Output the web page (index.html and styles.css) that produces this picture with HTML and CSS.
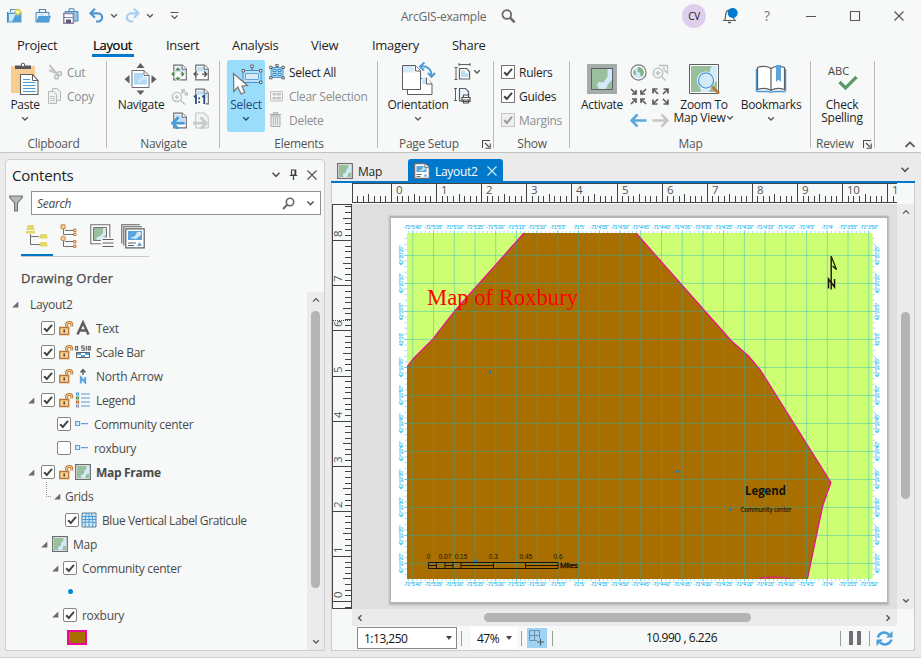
FILE: index.html
```html
<!DOCTYPE html>
<html lang="en">
<head>
<meta charset="utf-8">
<title>ArcGIS-example</title>
<link rel="stylesheet" href="styles.css">
</head>
<body>
<svg class="defs" width="0" height="0" aria-hidden="true">
  <symbol id="chev" viewBox="0 0 8 6"><path d="M1.2 1.2L4 4l2.8-2.8" fill="none" stroke="currentColor" stroke-width="1.3"/></symbol>
  <symbol id="chev-up" viewBox="0 0 8 6"><path d="M1 4.6L4 1.6l3 3" fill="none" stroke="currentColor" stroke-width="1.2"/></symbol>
  <symbol id="check" viewBox="0 0 14 14"><path d="M3.2 7.2l2.6 2.7 5.2-6" fill="none" stroke="currentColor" stroke-width="2"/></symbol>
  <symbol id="close" viewBox="0 0 12 12"><path d="M1.5 1.5l9 9m0-9l-9 9" fill="none" stroke="currentColor" stroke-width="1.2"/></symbol>
  <symbol id="tri" viewBox="0 0 7 7"><path d="M6.3.4v6.1H.2z" fill="#6e686e"/></symbol>
  <symbol id="launch" viewBox="0 0 9 9"><path d="M.5 8V.5H8M3 3l4 4M8.2 3.5v4.7H3.500" fill="none" stroke="#4a4a4a" stroke-width="1.1"/></symbol>
  <symbol id="lock" viewBox="0 0 15 15"><path d="M7.600 6V4a2.600 2.600 0 0 1 5.200 0v1.600" fill="none" stroke="#c07f3c" stroke-width="3"/><path d="M7.600 6V4a2.600 2.600 0 0 1 5.200 0v1.400" fill="none" stroke="#fbd7a0" stroke-width="1"/><path d="M.7 6.500h9v7h-9z" fill="#fbcf91" stroke="#b9783a" stroke-width="1.300"/><path d="M4.400 8.500h1.600v3H4.400z" fill="#5a4a3a"/></symbol>
  <symbol id="mapico" viewBox="0 0 16 16"><path d="M.7.7h14.600v14.600H.7z" fill="#fff" stroke="#6d6d70" stroke-width="1.300"/><path d="M2 2h12v12H2z" fill="#9abf9d"/><path d="M14 2v7.500l-2.500.5-1.300 4H6.600l-1-2.400L9 9.500l.4-3L11.400 5V2z" fill="#d3eaf8"/></symbol>
  <symbol id="layoutico" viewBox="0 0 16 16"><path d="M.7.7H11l4.300 4v10.600H.7z" fill="#fff" stroke="#6d6d70" stroke-width="1.200"/><path d="M2.500 3h10v6h-10z" fill="#5aa5dc"/><path d="M4 8l4-1.500L9 4l3-1v3L8.500 8z" fill="#cfe8f8"/><path d="M11 .7v4h4.300" fill="#fff" stroke="#6d6d70"/><path d="M2.500 11.500h5M2.500 13.500h4" stroke="#6d6d70"/><path d="M9.500 13.500l2-2.500 2 2.500z" fill="#5aa5dc"/></symbol>
  <symbol id="page" viewBox="0 0 16 16"><path d="M2.600 1h8l3.800 3.800V15H2.600z" fill="#fff" stroke="#6d6d70" stroke-width="1.100"/><path d="M4 2.500h6v3h3V9H4z" fill="#bfe0f6"/><path d="M10.500 1v4h4" fill="#fff" stroke="#6d6d70"/></symbol>
  <symbol id="legitem" viewBox="0 0 14 8"><path d="M.6 1.500h4v4h-4z" fill="#d7ecf9" stroke="#5aa5dc" stroke-width="1.200"/><path d="M6 3.600h7" stroke="#5aa5dc" stroke-width="1.200"/></symbol>
</svg>

<header class="titlebar">
  <div class="quick">
    <svg width="16" height="16" viewBox="0 0 16 16"><path d="M.5 4.500h14v10H.5z" fill="#4f9fda"/><path d="M3.500 4V1.500h6V4M.5 4v10.500" fill="none" stroke="#4f86b4"/><path d="M2 6h7l-4 7.500H2z" fill="#cfe6f6"/><path d="M10.700-.5v9M6.500 4h9M7.800 1l6 6M13.800 1l-6 6" stroke="#ded658" stroke-width=".9"/><circle cx="10.800" cy="4" r="2.300" fill="#fff9b8" stroke="#d6cf45" stroke-width="1.200"/></svg>
    <svg width="16" height="16" viewBox="0 0 16 16"><path d="M1 14V4.500h13V14z" fill="#e9f3fa" stroke="#4f86b4"/><path d="M4.500 4V1.500h6V4" fill="none" stroke="#4f86b4" stroke-width="1.200"/><path d="M1 14l2.500-6H16l-2.500 6z" fill="#4f9fda"/><path d="M2 6h7l-1.500 2" fill="#bddcf2"/></svg>
    <svg width="16" height="16" viewBox="0 0 16 16"><path d="M2 13V3.500h13V13z" fill="#8fc6ec" stroke="#4f86b4"/><path d="M6 3V.800h5V3" fill="none" stroke="#4f86b4"/><path d="M.8 5.500h9.600v9.700H.8z" fill="#fff" stroke="#8d84a5" stroke-width="1.500"/><path d="M3 11.500h5v3.500H3z" fill="#605a70"/><path d="M1 9.500h9" stroke="#8d84a5"/></svg>
    <svg class="undo" width="15" height="15" viewBox="0 0 15 15"><path d="M6 .8L1.500 5.300 6 9.800M2 5.300h7a4 4 0 0 1 0 8.200H7" fill="none" stroke="#4b96d2" stroke-width="2.200"/></svg>
    <svg class="c" width="8" height="6"><use href="#chev"/></svg>
    <svg class="redo" width="15" height="15" viewBox="0 0 15 15"><path d="M9 .8l4.500 4.500L9 9.800M13 5.300H6a4 4 0 0 0 0 8.200h2" fill="none" stroke="#a8cfee" stroke-width="2.200"/></svg>
    <svg class="c" width="8" height="6"><use href="#chev"/></svg>
    <svg class="custom" width="9" height="9" viewBox="0 0 9 9"><path d="M.5 1.500h8M1.500 4.500l3 3 3-3" fill="none" stroke="#555" stroke-width="1.100"/></svg>
  </div>
  <div class="apptitle"><span class="w-app">ArcGIS-example</span>
    <svg width="15" height="15" viewBox="0 0 15 15"><circle cx="5.800" cy="5.500" r="4.400" fill="none" stroke="#6a6a6a" stroke-width="1.700"/><path d="M9 8.700l4.600 4.600" stroke="#6a6a6a" stroke-width="2.600"/></svg>
  </div>
  <div class="winctl">
    <span class="avatar">CV</span>
    <svg class="bell" width="16" height="16" viewBox="0 0 16 16"><path d="M1 12.500h13M2.500 12.500C4 10.500 3 8 4 5c.5-2 2-3 3.500-3s3 1 3.500 3c.8 3 .2 5.500 1.500 7.500" fill="none" stroke="#5c5c5c" stroke-width="1.200"/><path d="M6 14.500h3" stroke="#5c5c5c" stroke-width="1.500"/><circle cx="10.700" cy="5" r="5" fill="#0079d0"/></svg>
    <span class="help">?</span>
    <svg class="min" width="12" height="12" viewBox="0 0 12 12"><path d="M1 6.500h10" stroke="#555"/></svg>
    <svg class="max" width="12" height="12" viewBox="0 0 12 12"><path d="M1.500 1.500h9v9h-9z" fill="none" stroke="#555" stroke-width="1.100"/></svg>
    <svg class="x" width="12" height="12"><use href="#close"/></svg>
  </div>
</header>

<nav class="tabs">
  <span>Project</span><span class="on"><b>Layout</b></span><span>Insert</span><span>Analysis</span><span>View</span><span>Imagery</span><span>Share</span>
</nav>

<section class="ribbon">
  <div class="group clip">
    <div class="body">
      <div class="big paste">
        <svg width="30" height="35" viewBox="0 0 30 35"><path d="M1 6h24v27H1z" fill="#f7cd92"/><path d="M5 5.500h16v3.500H5z" fill="#56565a"/><circle cx="13" cy="5" r="1.800" fill="#fff" stroke="#56565a"/><path d="M10.500 14.500h12l5.500 6v14H10.500z" fill="#fff" stroke="#5e5e62" stroke-width="1.100"/><path d="M22.500 14.500v6H28" fill="none" stroke="#5e5e62"/><path d="M13 19.500h7M13 22.500h12.500M13 25.500h12.500M13 28.500h12.500M13 31.500h12.500" stroke="#4b9bd6"/></svg>
        <span>Paste</span><svg class="c" width="8" height="6"><use href="#chev"/></svg>
      </div>
      <div class="stack dim">
        <div><svg width="16" height="16" viewBox="0 0 16 16"><path d="M2.500 1l7.500 9M2 6l8 3.500" stroke="#c4c6c6" stroke-width="2.200"/><circle cx="12.500" cy="9.500" r="1.900" fill="none" stroke="#b4b6b6" stroke-width="1.300"/><circle cx="9.500" cy="13" r="1.900" fill="none" stroke="#b4b6b6" stroke-width="1.300"/></svg><span>Cut</span></div>
        <div><svg width="16" height="16" viewBox="0 0 16 16"><path d="M5.500.6h5l3 3v8.800h-8z" fill="#f1f2f2" stroke="#b5b7b7"/><path d="M1.500 3.500h5l3 3v8.900h-8z" fill="#f1f2f2" stroke="#b5b7b7"/><path d="M3 8.500h5M3 10.500h5M3 12.500h5" stroke="#c5c7c7"/></svg><span>Copy</span></div>
      </div>
    </div>
    <div class="label"><span>Clipboard</span></div>
  </div>

  <div class="group nav">
    <div class="body">
      <div class="big navi">
        <svg width="34" height="35" viewBox="0 0 34 35"><path d="M12.500 8h8l-4-5zM12.500 30.500h8l-4 4.500zM5.500 15v8.500L.5 19.200zM27.500 15v8.500l5-4.300z" fill="#5e5e62"/><path d="M8 10.500h12l5 5v12H8z" fill="#fff" stroke="#6d6d70"/><path d="M10 13h9v4h4v7.500H10z" fill="#aed8f3"/><path d="M14.500 22.500l3-4h5" stroke="#d5ecfa" stroke-width="2" fill="none"/><path d="M20 10.500v5h5" fill="none" stroke="#6d6d70"/></svg>
        <span>Navigate</span>
      </div>
      <div class="icogrid">
        <svg width="17" height="17" viewBox="0 0 16 16"><use href="#page"/><path d="M6.500 4v11M1 9.500h11M4.500 6l2-2 2 2M4.500 13l2 2 2-2M3 7.500l-2 2 2 2M10 7.500l2 2-2 2" fill="none" stroke="#fff" stroke-width="2.600"/><path d="M6.500 4v3M6.500 12v3M1 9.500h3M9 9.500h3M4.500 6l2-2 2 2M4.500 13l2 2 2-2M3 7.500l-2 2 2 2M10 7.500l2 2-2 2" fill="none" stroke="#4f8a55" stroke-width="1.200"/></svg>
        <svg width="17" height="17" viewBox="0 0 16 16"><use href="#page"/><path d="M0 7h13v5H0z" fill="#f7f9f8"/><path d="M1 9.500h4M8.500 9.500H13M3.500 7L1 9.500 3.500 12M10.500 7L13 9.500 10.500 12" fill="none" stroke="#4a4a4a" stroke-width="1.200"/></svg>
        <svg width="17" height="17" viewBox="0 0 16 16" fill="none" stroke="#bdbfbf" stroke-width="1.200"><circle cx="5.500" cy="8.500" r="4.300"/><path d="M9 11.500l4 4M3.500 8.500h4M5.500 6.500v4M10.500 1.500h2v2h-2zM13.500 4.500h2v2h-2zM9.500 4.500h2"/></svg>
        <svg width="17" height="17" viewBox="0 0 16 16"><use href="#page"/><path d="M0 6.500h12V16H0z" fill="#f7f9f8"/><path d="M.8 8.300l2-1V15M8.600 8.300l2-1V15M5.800 9v1.700M5.800 12.500v1.700" fill="none" stroke="#2d4a80" stroke-width="1.700"/></svg>
        <svg width="17" height="17" viewBox="0 0 16 16"><use href="#page"/><path d="M7 5L1.500 10.500 7 16M2 10.500h11" fill="none" stroke="#4b9bd6" stroke-width="2.700"/></svg>
        <svg width="17" height="17" viewBox="0 0 16 16"><path d="M2.600 1h8l3.800 3.800V15H2.600z" fill="#f3f4f4" stroke="#c3c5c5"/><path d="M7 5l5.500 5.500L7 16M12 10.500H0" fill="none" stroke="#c9cbcb" stroke-width="2.600"/></svg>
      </div>
    </div>
    <div class="label"><span>Navigate</span></div>
  </div>

  <div class="group elem">
    <div class="body">
      <div class="big select">
        <svg width="36" height="35" viewBox="0 0 36 35"><path d="M15 10.500h18v12H15z" fill="#b9e1f9" stroke="#4b8fc4"/><path d="M17.500 13.500h13v6h-13z" fill="#dcebf5" stroke="#5aa5dc"/><g fill="#fff" stroke="#5d6268"><path d="M14 9.500h2.500V12H14zM31.500 9.500H34V12h-2.500zM31.500 21H34v2.500h-2.500zM22.800 5h2.500v2.500h-2.500zM24 7.500v3"/></g><path d="M5.500 13.500l.3 18 4-4.500 3.200 7 3.700-1.800L14 26l5.500-.5z" fill="#fff" stroke="#75706f" stroke-width="1.200"/></svg>
        <span>Select</span><svg class="c" width="8" height="6"><use href="#chev"/></svg>
      </div>
      <div class="stack">
        <div><svg width="16" height="16" viewBox="0 0 16 16"><path d="M2 3.500h12v10H2z" fill="#9fd0f0" stroke="#4b9bd6"/><path d="M4 5.500h3v2H4zM9 5.500h3v2H9zM4 9.500h3v2H4zM9 9.500h3v2H9z" fill="#fff" stroke="#3b88c4"/><path d="M.7 2.300h2.400v2.200H.7zM12.900 2.300h2.400v2.200h-2.400zM.7 12.700h2.400v2.200H.7zM12.900 12.700h2.400v2.200h-2.400zM6.800.3h2.400v2.200H6.800z" fill="#fff" stroke="#5d5d60"/></svg><span>Select All</span></div>
        <div class="dim"><svg width="16" height="16" viewBox="0 0 16 16"><path d="M1.500 3.500h12v9.500h-12z" fill="#f3f4f4" stroke="#c1c3c3"/><path d="M4 5.500h3v1.500H4zM8.500 5.500h3v1.500h-3zM4 9.500h3V11H4zM8.500 9.500h3V11h-3z" fill="none" stroke="#b9bbbb"/></svg><span>Clear Selection</span></div>
        <div class="dim"><svg width="16" height="16" viewBox="0 0 16 16"><path d="M.8 2.700h11.500M4.500 2.200V.800h4v1.400" fill="none" stroke="#a9abab" stroke-width="1.200"/><path d="M2 4h9v10.500H2z" fill="#e8eaea" stroke="#a9abab"/><path d="M4.500 5v8M6.500 5v8M8.500 5v8" stroke="#bcbebe"/></svg><span>Delete</span></div>
      </div>
    </div>
    <div class="label"><span>Elements</span></div>
  </div>

  <div class="group setup">
    <div class="body">
      <div class="big orient">
        <svg width="36" height="35" viewBox="0 0 36 35"><path d="M7.500 18.500h19l5.500 5v11H7.500z" fill="#fff" stroke="#5e5e62"/><path d="M22 18h5v6h-5z" fill="#c7e5f8"/><path d="M26.500 17.500v6.500H32" fill="#fff" stroke="#5e5e62"/><path d="M2.500 5.500h13l5 5v19h-18z" fill="#fff" stroke="#5e5e62"/><path d="M3 6h11v6.500H3z" fill="#d3eaf8"/><path d="M15.500 5.500v5.500h5" fill="#fff" stroke="#5e5e62"/><path d="M20.500 6.500c6-1 11 2 11 9M24.500 2.500L20 6.500l4 4M28 13l3.500 3.800 3.500-3.800" fill="none" stroke="#4b9bd6" stroke-width="1.900"/></svg>
        <span>Orientation</span><svg class="c" width="8" height="6"><use href="#chev"/></svg>
      </div>
      <div class="stack bare">
        <div><svg width="18" height="18" viewBox="0 0 18 18"><path d="M5.500 5.500h7l3 3V16h-10z" fill="#fff" stroke="#5e5e62" stroke-width="1.200"/><path d="M7 7.500h4V10h3v4H7z" fill="#b9def6"/><path d="M2 4.500v12M.5 4.500h3M.5 16.500h3M5 1.500h11M5 0v3M16 0v3" stroke="#5e5e62" fill="none"/></svg><svg class="c" width="8" height="6"><use href="#chev"/></svg></div>
        <div><svg width="18" height="18" viewBox="0 0 18 18"><path d="M5.500 1.500h6l3 3V14h-9z" fill="#e9f4fb" stroke="#5e5e62" stroke-width="1.200"/><path d="M1.500 1v13M0 1.500h3M0 13.500h3" stroke="#5e5e62"/><path d="M8 10.500h8v4H8zM9.500 8h5v2.500h-5zM9.500 13h5v3h-5z" fill="#fff" stroke="#4e4e52" stroke-width="1.200"/></svg></div>
      </div>
    </div>
    <div class="label"><span>Page Setup</span><svg class="l" width="9" height="9"><use href="#launch"/></svg></div>
  </div>

  <div class="group show">
    <div class="body">
      <div class="stack">
        <div><i class="cb"><svg width="14" height="14"><use href="#check"/></svg></i><span>Rulers</span></div>
        <div><i class="cb"><svg width="14" height="14"><use href="#check"/></svg></i><span>Guides</span></div>
        <div class="dim"><i class="cb"><svg width="14" height="14"><use href="#check"/></svg></i><span>Margins</span></div>
      </div>
    </div>
    <div class="label"><span>Show</span></div>
  </div>

  <div class="group map">
    <div class="body">
      <div class="big act">
        <svg width="30" height="35" viewBox="0 0 30 35"><path d="M0 4h30v30H0z" fill="#a5adaa"/><path d="M4.500 8.500h21v21h-21z" fill="#9abf9d" stroke="#5e5e62"/><path d="M25 9v11l-4 4-2 5h-7l-2-4 1.500-3 5 .5 4-6V9z" fill="#d3eaf8"/></svg>
        <span>Activate</span>
      </div>
      <div class="icogrid">
        <svg width="17" height="17" viewBox="0 0 17 17"><circle cx="8.500" cy="8.500" r="7.600" fill="#fff" stroke="#77777a" stroke-width="1.200"/><circle cx="8.500" cy="8.500" r="5.800" fill="#cfe8f8"/><path d="M8 3c3 0 5.500 2 6 5.500L12 13l-2-2 .5-2-3-1.500zM3.500 6l2 1 .5 4-2.500-1z" fill="#84b38a"/></svg>
        <svg width="17" height="17" viewBox="0 0 17 17" fill="none" stroke="#bdbfbf" stroke-width="1.300"><circle cx="6" cy="9" r="4.800"/><path d="M9.500 12.500l4 4M3.500 9h5M6 6.500v5M7 1.500h8.500V9L12 6V3"/></svg>
        <svg width="17" height="17" viewBox="0 0 17 17" fill="none" stroke="#5e5e62" stroke-width="1.700"><path d="M1 1l4.500 4.500M6 2v4H2M16 1l-4.500 4.500M11 2v4h4M1 16l4.500-4.500M6 15v-4H2M16 16l-4.500-4.500M11 15v-4h4"/></svg>
        <svg width="17" height="17" viewBox="0 0 17 17" fill="none" stroke="#5e5e62" stroke-width="1.700"><path d="M6 6L1.500 1.500M1 5.500V1h4.500M11 6l4.500-4.500M16 5.500V1h-4.500M6 11l-4.500 4.500M1 11.500V16h4.500M11 11l4.500 4.500M16 11.500V16h-4.500"/></svg>
        <svg width="17" height="17" viewBox="0 0 17 17" fill="none" stroke="#5aa8e0" stroke-width="2.500"><path d="M7.500 2.500l-6 6 6 6M2 8.500h14.500"/></svg>
        <svg width="17" height="17" viewBox="0 0 17 17" fill="none" stroke="#c6c8c8" stroke-width="2.500"><path d="M9.500 2.500l6 6-6 6M15 8.500H.5"/></svg>
      </div>
      <div class="big zoom">
        <svg width="32" height="35" viewBox="0 0 32 35"><path d="M1.500 4.500h29v29h-29z" fill="#fff" stroke="#5e5e62"/><path d="M3 6h26v26H3z" fill="#9abf9d"/><path d="M29 6v15l-5 3-3 8h-8l-1-4 6-4 4-8V9l2-3z" fill="#d3eaf8"/><circle cx="18" cy="20.500" r="7.300" fill="#d3eaf8" stroke="#fff" stroke-width="3.500"/><circle cx="18" cy="20.500" r="7.600" fill="#d3eaf8" stroke="#4b9bd6" stroke-width="1.400"/><path d="M24 26.500l7 7" stroke="#bb8040" stroke-width="3"/></svg>
        <span>Zoom To</span><span class="two">Map View <svg class="c" width="8" height="6"><use href="#chev"/></svg></span>
      </div>
      <div class="big bm">
        <svg width="32" height="35" viewBox="0 0 32 35"><path d="M1.500 31.500V9M30.500 31.500V9" stroke="#4b9bd6" stroke-width="1.500"/><path d="M1.500 31.500h11l3.500.8 3.500-.8h11" stroke="#4b9bd6" stroke-width="1.300" fill="none"/><path d="M2.500 7.500c4-1.600 10-1.600 13.500 1 3.500-2.600 9.500-2.600 13.500-1v22c-4-1.300-10-1.300-13.500 1-3.500-2.300-9.500-2.300-13.500-1zM16 8.500v22" fill="#fff" stroke="#5e5e62" stroke-width="1.200"/><path d="M21 5h5v17l-2.500-2.500L21 22z" fill="#5aa5dc"/></svg>
        <span>Bookmarks</span><svg class="c" width="8" height="6"><use href="#chev"/></svg>
      </div>
    </div>
    <div class="label"><span>Map</span></div>
  </div>

  <div class="group review">
    <div class="body">
      <div class="big spell">
        <div class="abc">ABC<svg width="20" height="16" viewBox="0 0 20 16"><path d="M1.500 7l6 6L18.500 2" fill="none" stroke="#5c9a68" stroke-width="3.300"/></svg></div>
        <span>Check</span><span class="two">Spelling</span>
      </div>
    </div>
    <div class="label"><span>Review</span><svg class="l" width="9" height="9"><use href="#launch"/></svg></div>
  </div>
  <svg class="collapse" width="12" height="9"><use href="#chev-up"/></svg>
</section>

<main class="work">
  <aside class="contents">
    <div class="ctitle"><span>Contents</span>
      <svg class="c1" width="10" height="8"><use href="#chev"/></svg>
      <svg class="c2" width="9" height="11" viewBox="0 0 9 11"><path d="M2.500 1h4.200v5H2.500zM.8 6.500h7.400M4.500 7v4M6 1v5" fill="none" stroke="#444" stroke-width="1.200"/></svg>
      <svg class="c3" width="12" height="12"><use href="#close"/></svg>
    </div>
    <div class="searchrow">
      <svg width="14" height="17" viewBox="0 0 14 17"><path d="M.7 1h12.600v1.500L8.500 8v8H5.600V8L.7 2.500z" fill="#b5bab8" stroke="#707070" stroke-width="1.100"/></svg>
      <div class="searchbox"><em>Search</em>
        <svg width="13" height="13" viewBox="0 0 13 13"><circle cx="8" cy="5" r="3.700" fill="none" stroke="#666" stroke-width="1.600"/><path d="M5.500 7.500L1 12" stroke="#666" stroke-width="2"/></svg>
        <svg width="9" height="7"><use href="#chev"/></svg>
      </div>
    </div>
    <div class="views">
      <svg width="24" height="24" viewBox="0 0 24 24"><path d="M5.500 10v10.500H15M5.500 12.500H14" fill="none" stroke="#707070"/><path d="M2.500 1h6l1 5H1.500zM1 7h9v2.500H1zM15.500 10h6l1.500 4.500h-9zM15.500 18h6l1.500 4.500h-9z" fill="#e4d765"/></svg>
      <svg width="17" height="24" viewBox="0 0 17 24"><path d="M3.500 5v5.500H13M5 6.500h8M3.500 15v7.500H13M5 17.500h8" fill="none" stroke="#707070"/><path d="M1 .8h4v4H1zM13.500 5h2.500v2.500h-2.500zM13.500 9h2.500v2.500h-2.500zM13.500 16.500h2.500V19h-2.500zM13.500 21h2.500v2.500h-2.500z" fill="#f9c98d" stroke="#c98848"/><circle cx="3.200" cy="14.500" r="2.300" fill="#f9c98d" stroke="#c98848"/></svg>
      <svg width="24" height="24" viewBox="0 0 24 24"><path d="M.8.8h19v19H.8z" fill="#fff" stroke="#707070" stroke-width="1.100"/><path d="M3.500 3.500h13v13h-13z" fill="#9abf9d" stroke="#707070"/><path d="M16 4v7l-3 2-2 3H7l-1-2 4-2 3-3V4z" fill="#d3eaf8"/><path d="M11 13.500h13v10H11z" fill="#f7f9f8"/><path d="M12.500 15.500h11M12.500 19h11M12.500 22.500h11" stroke="#606060"/></svg>
      <svg width="24" height="25" viewBox="0 0 24 25"><path d="M.8 19.500V.8h18M2.800 21.500V2.800h18" fill="none" stroke="#606060" stroke-width="1.100"/><path d="M4.800 4.800h18.400v19H4.800z" fill="#fff" stroke="#606060" stroke-width="1.200"/><path d="M7 7h14v9H7z" fill="#5aa5dc"/><path d="M9 14l5-2 2-4 4 0v3l-5 4z" fill="#cfe8f8"/><path d="M7 19h8M7 21.500h6" stroke="#606060"/><path d="M16 22l2.500-4 2.500 4z" fill="#5aa5dc"/></svg>
    </div>
    <div class="viewline"></div>
    <h2>Drawing Order</h2>
    <div class="treewrap">
      <div class="tree">
        <div class="row r-root"><svg class="t"><use href="#tri"/></svg><span>Layout2</span></div>
        <div class="row r-item"><i class="cb r"><svg width="14" height="14"><use href="#check"/></svg></i><svg class="lk"><use href="#lock"/></svg><svg class="ic" viewBox="0 0 16 16"><path d="M2.500 14.500L8 2.500l5.500 12M4.500 10.500h7" fill="none" stroke="#5e5e62" stroke-width="2.500"/></svg><span>Text</span></div>
        <div class="row r-item"><i class="cb r"><svg width="14" height="14"><use href="#check"/></svg></i><svg class="lk"><use href="#lock"/></svg><svg class="ic" viewBox="0 0 16 16"><path d="M.6 2.500h2v3.500h-2zM9.500 2H6.700v2h2.500v2.200H6.300M11.300 2v4.500M13.300 2.500h2v3.500h-2z" fill="none" stroke="#5e5e62" stroke-width="1.100"/><path d="M1.500 8.500h13v5h-13z" fill="#fff" stroke="#5e5e62"/><path d="M2 9h4v2h4V9h4v2h-4v2H6v-2H2z" fill="#5aa5dc"/></svg><span>Scale Bar</span></div>
        <div class="row r-item"><i class="cb r"><svg width="14" height="14"><use href="#check"/></svg></i><svg class="lk"><use href="#lock"/></svg><svg class="ic" viewBox="0 0 16 16"><path d="M8 7V2M5.500 4.500L8 1.700l2.500 2.800" fill="none" stroke="#5e5e62" stroke-width="1.500"/><path d="M5.800 15.500V9.500l4.400 5V9" fill="none" stroke="#5aa5dc" stroke-width="2"/></svg><span>North Arrow</span></div>
        <div class="row r-parent"><svg class="t"><use href="#tri"/></svg><i class="cb r"><svg width="14" height="14"><use href="#check"/></svg></i><svg class="lk"><use href="#lock"/></svg><svg class="ic" viewBox="0 0 16 16"><path d="M6 2h9M6 6h9M6 10h9M6 14h9" stroke="#4b9bd6"/><g fill="#fff" stroke-width="1.200"><path d="M1.500 1h2v2h-2z" stroke="#4b9bd6"/><path d="M1.500 5h2v2h-2z" stroke="#4f8a55"/><path d="M1.500 9h2v2h-2z" stroke="#c07030"/><path d="M1.500 13h2v2h-2z" stroke="#9a94b4"/></g></svg><span>Legend</span></div>
        <div class="row r-leg"><i class="cb r"><svg width="14" height="14"><use href="#check"/></svg></i><svg class="lg"><use href="#legitem"/></svg><span>Community center</span></div>
        <div class="row r-leg"><i class="cb r"></i><svg class="lg"><use href="#legitem"/></svg><span>roxbury</span></div>
        <div class="row r-parent"><svg class="t"><use href="#tri"/></svg><i class="cb r"><svg width="14" height="14"><use href="#check"/></svg></i><svg class="lk"><use href="#lock"/></svg><svg class="ic"><use href="#mapico"/></svg><span class="bold">Map Frame</span></div>
        <div class="row r-grids"><i class="dots"></i><svg class="t"><use href="#tri"/></svg><span>Grids</span></div>
        <div class="row r-grat"><i class="cb r"><svg width="14" height="14"><use href="#check"/></svg></i><svg class="ic" viewBox="0 0 16 16"><path d="M1 1h14v14H1z" fill="#cfe8f8" stroke="#607c90"/><path d="M5.500 1C4 6 4 11 4.500 15M10.500 1C12 6 12 11 11.500 15M8 1v14M1 4.500h14M1 11c4-1.500 10-1.500 14 0M1 7.500h14" fill="none" stroke="#4b9bd6"/></svg><span class="gl">Blue Vertical Label Graticule</span></div>
        <div class="row r-map"><svg class="t"><use href="#tri"/></svg><svg class="ic"><use href="#mapico"/></svg><span>Map</span></div>
        <div class="row r-layer"><svg class="t"><use href="#tri"/></svg><i class="cb r"><svg width="14" height="14"><use href="#check"/></svg></i><span>Community center</span></div>
        <div class="row r-dot"><i></i></div>
        <div class="row r-layer s"><svg class="t"><use href="#tri"/></svg><i class="cb r"><svg width="14" height="14"><use href="#check"/></svg></i><span>roxbury</span></div>
        <div class="row r-swatch"><i></i></div>
      </div>
      <div class="vs tscroll"><svg width="8" height="6"><use href="#chev-up"/></svg><i></i><svg width="8" height="6"><use href="#chev"/></svg></div>
    </div>
  </aside>

  <section class="doc">
    <div class="doctabs">
      <div class="dt"><svg width="16" height="16"><use href="#mapico"/></svg><span>Map</span></div>
      <div class="dt active"><svg width="16" height="16"><use href="#layoutico"/></svg><span>Layout2</span><svg class="dx" width="12" height="12"><use href="#close"/></svg></div>
      <svg class="more" width="10" height="8"><use href="#chev"/></svg>
    </div>
    <div class="pane">
      <div class="corner"></div>
      <svg class="hruler" id="hruler" width="545" height="21" viewBox="352 184 545 21"></svg>
      <div class="corner"></div>
      <svg class="vruler" id="vruler" width="20" height="405" viewBox="332 204 20 405"></svg>
      <svg class="canvas" width="545" height="405" viewBox="352 204 545 405">
        <rect x="352" y="204" width="545" height="405" fill="#dfdfdf"/>
        <rect x="388" y="215" width="502" height="391" rx="2" fill="#d0d0d0"/>
        <rect x="389.500" y="216" width="499" height="388.500" fill="#b5b5b5"/>
        <rect x="391" y="218" width="496" height="384" fill="#fff"/>
        <rect x="407" y="233" width="465.500" height="346" fill="#cefe73"/>
        <path d="M407 579V367L413 359 432 340 455.500 310 524 233H636L704 310 731.500 341 748.500 356 760 369.500 831 482.500 823 505 818 528 807.500 579z" fill="#a86f00"/>
        <path d="M407 367L413 359 432 340 455.500 310 524 233M636 233L704 310 731.500 341 748.500 356 760 369.500 831 482.500 823 505 818 528 807.500 579M759 578.500q15-3 31 0" fill="none" stroke="#ee0a9a" stroke-width="1.200"/>
        <g id="graticule"></g>
        <g fill="#0a84c8"><circle cx="490.300" cy="372.500" r="1.400"/><circle cx="677.400" cy="471.500" r="1.500"/><circle cx="765.500" cy="491.500" r="2"/><circle cx="730.500" cy="509.500" r="1.500"/><circle cx="475.300" cy="560.500" r="1.500"/></g>
        <text class="maptitle" x="427" y="305" textLength="151" lengthAdjust="spacingAndGlyphs">Map of Roxbury</text>
        <text class="legtitle" x="745" y="494.500" textLength="41" lengthAdjust="spacingAndGlyphs">Legend</text>
        <text class="legtext" x="740.500" y="512" textLength="51" lengthAdjust="spacingAndGlyphs">Community center</text>
        <g fill="none" stroke="#1c1208"><path d="M831.200 256v33.500" stroke-width="1.400"/><path d="M831.500 257l5 12.500-4-3.500" stroke-width="1.200"/><path d="M828.500 288.500v-9.500l6 8v-8" stroke-width="1.500"/>
        <path d="M428.500 562.500h129.500v6H428.500zM436.500 562v7M445 562v7M453 562v7M461 562v7M493.500 562v7M525.500 562v7M428.500 565.500h8M445 565.500h8M461 565.500h32.500M525.500 565.500H558"/></g>
        <g class="scale"><text x="428.500" y="559">0</text><text x="445" y="559">0.07</text><text x="461" y="559">0.15</text><text x="493.300" y="559">0.3</text><text x="525.800" y="559">0.45</text><text x="558" y="559">0.6</text></g>
        <text class="miles" x="560" y="568" textLength="18">Miles</text>
      </svg>
      <div class="vs dscroll"><svg width="8" height="6"><use href="#chev-up"/></svg><i></i><svg width="8" height="6"><use href="#chev"/></svg></div>
      <div class="corner"></div>
      <div class="hs"><svg width="6" height="8" viewBox="0 0 6 8"><path d="M4.500 1.200L1.500 4l3 2.800" fill="none" stroke="#444" stroke-width="1.200"/></svg><i></i><svg width="6" height="8" viewBox="0 0 6 8"><path d="M1.500 1.200L4.500 4l-3 2.800" fill="none" stroke="#444" stroke-width="1.200"/></svg></div>
      <div class="corner"></div>
      <div class="status">
        <div class="scalebox"><span>1:13,250</span><b></b></div><i class="sep s1"></i>
        <div class="pct"><span>47%</span><b></b></div><i class="sep s2"></i>
        <div class="snap"><svg width="18" height="18" viewBox="0 0 18 18"><path d="M1.500 1.500h10v10h-10zM6.500 1.500v10M1.500 6.500h10" fill="none" stroke="#7291a5"/><path d="M9 9h8v8H9z" fill="#9fd3f5"/><path d="M12.500 9.500v7M9 13h7" stroke="#505a60" stroke-width="1.100"/></svg></div><i class="sep s3"></i>
        <span class="coords">10.990 , 6.226</span>
        <i class="sep s4"></i><i class="pause"></i><i class="sep s5"></i>
        <svg class="refresh" width="17" height="17" viewBox="0 0 17 17"><path d="M2 7.500C2.500 3.500 8 .5 13 4.500M15.500 9.500C14.500 13.500 9 16.500 4 12.500" fill="none" stroke="#4b9fdc" stroke-width="2.400"/><path d="M16.500 1v6.500H10zM.5 16V9.500H7z" fill="#4b9fdc"/></svg>
      </div>
    </div>
  </section>
</main>
<script src="rulers.js"></script>
</body>
</html>
```

FILE: rulers.js
```js
// Rulers: one inch of page is 45.1px on screen, with eighth-inch ticks.
const INCH = 45.1, X0 = 391.5, Y0 = 601.5;

function horizontalRuler() {
  let s = '<rect x="352.5" y="184.500" width="546" height="19" fill="#f7f9f8" stroke="#444"/>';
  for (let i = -6; i < 90; i++) {
    const x = Math.round(X0 + i * INCH / 8 - 0.5) + 0.5;
    if (x < 355 || x > 896) continue;
    const top = i % 8 === 0 ? 184 : i % 4 === 0 ? 195 : 197;
    s += `<path d="M${x} ${top}V203.500"/>`;
    if (i % 8 === 0) s += `<text x="${x + 4.5}" y="194.500">${i / 8}</text>`;
  }
  s += '<path d="M887.500 185V203" stroke-dasharray="1 1"/>';
  document.getElementById('hruler').innerHTML = s;
}

function verticalRuler() {
  let s = '<rect x="332.500" y="204.500" width="19" height="404" fill="#f7f9f8" stroke="#444"/>';
  for (let i = -1; i < 71; i++) {
    const y = Math.round(Y0 - i * INCH / 8 - 0.5) + 0.5;
    if (y < 205 || y > 608) continue;
    const left = i % 8 === 0 ? 332 : i % 4 === 0 ? 343 : 345;
    s += `<path d="M${left} ${y}H351.500"/>`;
    if (i % 8 === 0) s += `<text transform="translate(341.5 ${y - 3.5}) rotate(-90)">${i / 8}</text>`;
  }
  s += '<path d="M333 320.500H351" stroke-dasharray="1 1"/>';
  document.getElementById('vruler').innerHTML = s;
}

// Graticule: a line every five seconds of arc, labelled on all four sides.
function dms(seconds, sign) {
  const d = Math.floor(seconds / 3600), m = Math.floor(seconds % 3600 / 60), r = seconds % 60;
  return `${sign}${d}°${m}'` + (r ? `${r}"` : '');
}

function graticule() {
  let s = '<g class="minor">';
  for (let i = -1; i < 111; i++) {
    const x = 412.8 + i * 4.145;
    s += `<path d="M${x} 231v2M${x} 579v2"/>`;
  }
  for (let i = -3; i < 58; i++) {
    const y = 255.4 + i * 5.6;
    s += `<path d="M404.500 ${y}h2.500M872.500 ${y}h2.500"/>`;
  }
  s += '</g>';
  for (let i = 0; i < 23; i++) {
    const x = 412.8 + i * 20.725, t = dms(71 * 3600 + 5 * 60 + 40 - i * 5, '-');
    s += `<path d="M${x} 230V582"/><text x="${x}" y="229">${t}</text><text x="${x}" y="586">${t}</text>`;
  }
  for (let i = 0; i < 12; i++) {
    const y = 255.4 + i * 28, t = dms(42 * 3600 + 20 * 60 + 15 - i * 5, '');
    s += `<path d="M404 ${y}H875.500"/>`;
    for (const x of [403.2, 879.2]) s += `<text transform="translate(${x} ${y}) rotate(-90)">${t}</text>`;
  }
  document.getElementById('graticule').innerHTML = s;
}

horizontalRuler();
verticalRuler();
graticule();
```

FILE: styles.css
```css
* { box-sizing: border-box; }
body {
  margin: 0; width: 921px; height: 658px; overflow: hidden;
  display: flex; flex-direction: column;
  background: #f7f9f8; color: #1f1f1f;
  font: 12px/16px "Open Sans", "Noto Sans", sans-serif; letter-spacing: -0.28px;
}
svg { display: block; flex: none; color: #555; }
svg.defs { position: absolute; }
i { font-style: normal; flex: none; }
span { white-space: nowrap; }

.titlebar { display: flex; height: 33px; flex: none; }
.quick { display: flex; align-items: center; width: 401px; padding: 0 0 2px 7px; gap: 12px; }
.quick .undo { margin-left: -2px; }
.quick .c { margin-left: -6px; }
.quick .redo { margin-left: -5px; }
.quick .custom { margin-left: 4px; }
.apptitle { display: flex; align-items: center; width: 281px; color: #666; padding-bottom: 1px; }
.apptitle span { width: 100px; letter-spacing: -0.25px; padding-top: 1px; }
.winctl { display: flex; align-items: center; flex: 1; padding-bottom: 1px; }
.avatar { width: 24px; height: 24px; border-radius: 12px; background: #dfcfee; text-align: center; font-size: 10px; line-height: 24px; color: #222; }
.bell { margin-left: 16px; }
.help { width: 10px; margin-left: 24px; font-size: 14px; color: #777; text-align: center; }
.min { margin-left: 33px; }
.max { margin-left: 32px; }
.winctl .x { margin-left: 32px; }

.tabs { display: grid; grid-template-columns: 76px 73px 66px 79px 61px 80px 60px; padding-left: 17px; height: 27px; flex: none; font-size: 13px; line-height: 24px; letter-spacing: -0.3px; }
.tabs .on b { display: block; width: 42px; height: 24px; margin-left: -1px; padding-left: 1px; font-weight: 500; color: #000; border-bottom: 3px solid #0079d0; -webkit-text-stroke: 0.2px #000; }

.ribbon { display: flex; height: 93px; flex: none; border-bottom: 1px solid #c4c4c4; }
.group { position: relative; height: 92px; flex: none; }
.group::after { content: ""; position: absolute; right: 0; top: 1px; height: 87px; width: 1px; background: #bababa; }
.group .body { display: flex; height: 72px; }
.group .label { display: flex; justify-content: center; height: 20px; line-height: 24px; color: #555; }
.big { display: flex; flex-direction: column; align-items: center; height: 72px; flex: none; }
.big > svg:first-child { height: 35px; margin-bottom: 2px; }
.big span { line-height: 16px; }
.big .c { margin-top: 3px; }
.big.zoom span, .big.spell span { line-height: 13px; height: 13px; }
.big.zoom span:first-of-type, .big.spell span:first-of-type { margin-top: 1px; }
.big .two { display: flex; align-items: center; gap: 1px; }
.big .two .c { margin-top: 1px; }
.stack > div { display: flex; align-items: center; height: 24px; gap: 4px; }
.stack span { padding-top: 2px; }
.dim span { color: #8c8e8e; }
.icogrid { display: grid; grid-template-columns: 17px 17px; grid-template-rows: repeat(3, 24px); column-gap: 5px; align-items: center; }

.clip { width: 107px; }
.paste { width: 40px; margin-left: 5px; }
.clip .stack { margin-left: 2px; }
.nav { width: 113px; }
.navi { width: 60px; margin-left: 4px; }
.elem { width: 158px; }
.select { width: 38px; margin-left: 7px; margin-right: 4px; background: #9addfb; border-radius: 2px; color: #234a80; }
.select .c { color: #234a80; }
.setup { width: 116px; }
.orient { width: 70px; margin-left: 5px; margin-right: 1px; }
.bare .c { margin-left: -3px; }
.show { width: 76px; }
.show .stack { margin-left: 7px; }
.cb { display: inline-block; width: 14px; height: 14px; border: 1px solid #777; background: #fff; }
.cb svg { margin: -1px; color: #444; }
.cb.r { border-radius: 2px; border-color: #858585; }
.dim .cb { background: #eef0f0; border-color: #c4c6c6; }
.dim .cb svg { color: #999; }
.map { width: 241px; }
.act { width: 54px; margin-left: 5px; }
.zoom { width: 66px; margin-left: 2px; }
.bm { width: 68px; }
.review { width: 64px; }
.spell { width: 64px; margin-left: -1px; }
.abc { position: relative; width: 28px; height: 37px; padding-top: 3px; font-size: 11px; color: #444; letter-spacing: 0.1px; }
.abc svg { position: absolute; left: 10px; top: 15px; }
.map .icogrid { margin-left: 1px; }
.label .l { margin: 8px 3px 0 auto; }
.setup .label { padding-left: 21px; }
.review .label { padding-left: 5px; }
.collapse { margin: 80px 0 0 29px; }

.work { display: flex; flex: 1; padding: 6px 5px 0 5px; background: #ebebeb; border-bottom: 1px solid #cdcdcd; height: 505px; }
.contents { width: 320px; height: 492px; flex: none; border: 1px solid #cfcfcf; border-radius: 4px 4px 0 0; background: #f7f9f8; color: #4a4a4a; }
.ctitle { display: flex; align-items: center; height: 31px; padding: 0 0 2px 6px; color: #222; }
.ctitle span { width: 259px; font-size: 15px; letter-spacing: -0.2px; }
.ctitle .c2 { margin-left: 8px; }
.ctitle .c3 { margin-left: 8px; }
.searchrow { display: flex; align-items: center; height: 24px; padding-left: 3px; gap: 8px; }
.searchbox { display: flex; align-items: center; width: 290px; height: 24px; padding: 0 5px; border: 1px solid #909090; background: #fff; }
.searchbox em { width: 245px; padding-top: 1px; }
.searchbox svg:last-child { margin-left: 11px; }
.views { display: flex; height: 39px; padding: 9px 0 0 19px; }
.views svg:nth-child(2) { margin-left: 11px; }
.views svg:nth-child(3) { margin-left: 13px; }
.views svg:nth-child(4) { margin-left: 7px; }
.viewline { width: 128px; height: 3px; margin-left: 15px; border-bottom: 1px solid #c8c8c8; background: linear-gradient(#0079cc, #0079cc) 0 0 / 32px 3px no-repeat border-box; }
h2 { margin: 0; height: 35px; padding-left: 15px; font-size: 13px; line-height: 43px; font-weight: 500; letter-spacing: 0.2px; -webkit-text-stroke: 0.25px #4a4a4a; }
.treewrap { display: flex; height: 358px; }
.tree { width: 301px; }
.row { display: flex; align-items: center; height: 24px; }
.row span { padding-top: 2px; }
.t { width: 7px; height: 7px; }
.lk { width: 15px; height: 15px; margin: 0 1px 0 4px; }
.ic { width: 16px; height: 16px; }
.lg { width: 14px; height: 8px; margin: 0 5px 0 4px; }
.bold { font-weight: 700; letter-spacing: -0.3px; }
.ic + span { margin-left: 5px; }
.r-root { padding-left: 6px; }
.r-root span { margin-left: 11px; }
.r-item { padding-left: 35px; }
.r-parent { padding-left: 22px; }
.r-parent .t { margin-right: 6px; }
.r-leg { padding-left: 51px; }
.r-grids { padding-left: 40px; }
.dots { width: 5px; height: 15px; margin: -14px 3px 0 0; border-left: 1px dotted #999; border-bottom: 1px dotted #999; }
.r-grids span { margin-left: 4px; }
.r-grat { padding-left: 59px; }
.r-grat .ic { margin-left: 2px; }
.gl { letter-spacing: -0.4px; }
.r-map { padding-left: 35px; }
.r-map .ic { margin-left: 4px; }
.r-layer { padding-left: 46px; }
.r-layer .cb { margin: 0 5px 0 4px; }
.r-layer.s, .r-dot, .r-swatch { height: 23px; }
.r-dot i { width: 5px; height: 5px; margin-left: 62px; border-radius: 3px; background: #0a84d0; }
.r-swatch i { width: 20px; height: 15px; margin-left: 61px; border: 2px solid #ea0a9c; background: #a86f00; }
.vs { display: flex; flex-direction: column; align-items: center; justify-content: space-between; width: 17px; background: #ebebeb; padding: 5px 0; }
.vs i { width: 9px; border-radius: 5px; background: #b3b5b4; }
.tscroll i { height: 277px; margin-bottom: 43px; }

.doc { width: 585px; margin-left: 6px; height: 492px; flex: none; }
.doctabs { display: flex; height: 24px; border-bottom: 2px solid #0079cc; padding-left: 6px; align-items: center; width: 584px; }
.dt { display: flex; align-items: center; gap: 5px; width: 71px; height: 22px; padding-top: 2px; font-size: 12px; }
.dt span { padding-top: 2px; }
.active { width: 95px; padding: 2px 5px 0 6px; border-radius: 3px 3px 0 0; background: #0079cc; color: #fff; }
.dx { margin-left: auto; color: #cfe6f8; }
.more { margin-left: 397px; }
.pane { display: grid; grid-template: 21px 405px 17px 24px / 20px 545px 17px; width: 584px; height: 468px; border: solid #cacaca; border-width: 0 1px 1px 1px; background: #f7f9f8; }
.hruler path, .vruler path { stroke: #444; fill: none; }
.hruler text, .vruler text { font-size: 11.500px; fill: #555; }
.vs.dscroll i { height: 187px; margin: 94px 0 96px; }
.hs { display: flex; align-items: center; background: #ebebeb; padding: 0 5px; }
.hs i { width: 267px; height: 9px; margin: 0 134px 0 121px; border-radius: 5px; background: #b3b5b4; }
.status { grid-column: 1 / -1; display: flex; align-items: center; padding-left: 25px; color: #111; }
.scalebox { display: flex; align-items: center; width: 100px; height: 22px; padding: 0 4px 0 6px; border: 1px solid #888; background: #fff; justify-content: space-between; }
.scalebox span { letter-spacing: -0.5px; padding-top: 2px; }
.status b { border: 3px solid transparent; border-top: 4px solid #444; border-bottom: 0; }
.sep { width: 1px; height: 15px; background: #93a393; }
.s1 { margin: 0 9px 0 4px; }
.pct { display: flex; align-items: center; width: 46px; height: 22px; background: #fff; padding: 0 5px 0 6px; justify-content: space-between; }
.pct span { padding-top: 2px; letter-spacing: -0.5px; }
.s2 { margin: 0 5px 0 4px; }
.snap { width: 20px; height: 20px; padding: 1px; background: #9fd3f5; }
.s3 { margin: 0 93px 0 5px; }
.coords { width: 194px; letter-spacing: -0.45px; }
.pause { width: 12px; height: 14px; margin: 0 8px; border: solid #707074; border-width: 0 4px; }
.refresh { margin-left: 6px; }

.maptitle { font: 24px "Liberation Serif", serif; fill: #f00; letter-spacing: 0; }
.legtitle { font-weight: 700; font-size: 11.500px; fill: #171106; letter-spacing: 0; }
.legtext { font-size: 6.300px; fill: #171106; stroke: #171106; stroke-width: 0.15px; letter-spacing: 0; }
.scale { font: 6.500px "Liberation Sans", sans-serif; fill: #171106; text-anchor: middle; letter-spacing: 0; }
.miles { font: 8px "Liberation Sans", sans-serif; fill: #171106; stroke: #171106; stroke-width: 0.3px; letter-spacing: 0; }
#graticule path { stroke: rgba(20, 180, 205, 0.4); stroke-width: 1; fill: none; }
#graticule .minor path { stroke: #9be2f8; }
#graticule text { font: 4.600px "Liberation Sans", sans-serif; letter-spacing: 0; fill: #25bdf0; stroke: #25bdf0; stroke-width: 0.15px; text-anchor: middle; }
```
